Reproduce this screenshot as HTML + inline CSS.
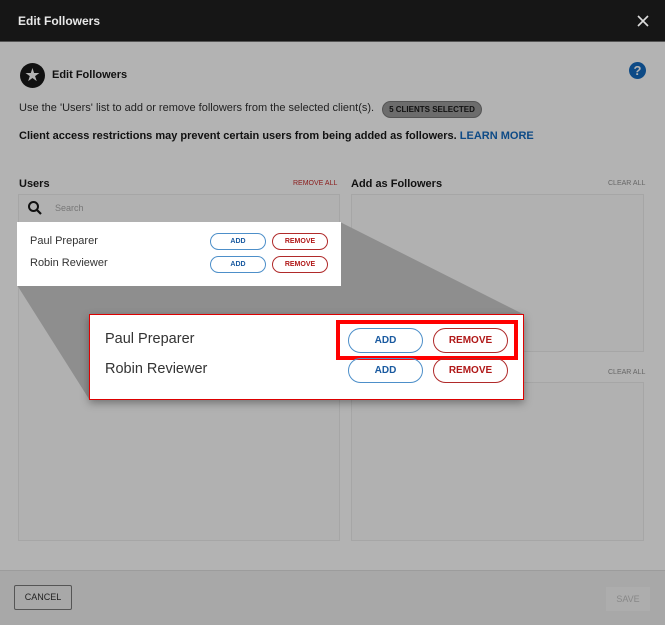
<!DOCTYPE html>
<html><head><style>
*{box-sizing:border-box;margin:0;padding:0}
body{width:665px;height:625px;background:#b3b3b3;font-family:"Liberation Sans",sans-serif;position:relative;overflow:hidden;color:#111}
.a{position:absolute}
.hdr{left:0;top:0;width:665px;height:42px;background:#161616;color:#e8e8e8;font-weight:bold;font-size:12px;padding:14px 0 0 18px;border-bottom:1px solid #555}
.panel{border:1px solid #a6a6a6;background:#b1b1b1}
.btn{position:absolute;border:1px solid;border-radius:12px;text-align:center;font-weight:bold}
.s{font-size:7px;height:17px;line-height:15px}
.b{font-size:10px;height:25px;line-height:23px;border-radius:13px}
.blue{border-color:#4d8fc9;color:#1a5aa0}
.red{border-color:#b02a2a;color:#b01818}
</style></head><body>
<div class="a hdr">Edit Followers</div>
<svg class="a" style="left:637px;top:15px" width="12" height="12" viewBox="0 0 12 12"><path d="M1 1L11 11M11 1L1 11" stroke="#ddd" stroke-width="1.6"/></svg>
<div class="a" style="left:20px;top:63px;width:25px;height:25px;border-radius:50%;background:#111;color:#b3b3b3;font-size:18px;line-height:25px;text-align:center">★</div>
<div class="a" style="left:52px;top:69px;font-size:11px;font-weight:bold">Edit Followers</div>
<div class="a" style="left:629px;top:62px;width:17px;height:17px;border-radius:50%;background:#0d4a86;color:#b3b3b3;font-size:13px;font-weight:bold;text-align:center;line-height:17px">?</div>
<div class="a" style="left:19px;top:102px;font-size:11px;color:#222">Use the 'Users' list to add or remove followers from the selected client(s).</div>
<div class="a" style="left:382px;top:101px;width:100px;height:17px;border-radius:9px;background:#6c6c6c;border:1px solid #555;font-size:8px;font-weight:bold;line-height:15px;text-align:center;color:#111">5 CLIENTS SELECTED</div>
<div class="a" style="left:19px;top:130px;font-size:11px;font-weight:bold">Client access restrictions may prevent certain users from being added as followers. <span style="color:#0d4a86">LEARN MORE</span></div>
<div class="a" style="left:19px;top:178px;font-size:11px;font-weight:bold">Users</div>
<div class="a" style="left:293px;top:180px;font-size:7px;color:#8a1a1a">REMOVE ALL</div>
<div class="a" style="left:351px;top:178px;font-size:11px;font-weight:bold">Add as Followers</div>
<div class="a" style="left:608px;top:180px;font-size:7px;color:#666">CLEAR ALL</div>
<div class="a" style="left:608px;top:369px;font-size:7px;color:#666">CLEAR ALL</div>
<div class="a panel" style="left:18px;top:194px;width:322px;height:347px"></div>
<div class="a panel" style="left:351px;top:194px;width:293px;height:158px"></div>
<div class="a panel" style="left:351px;top:382px;width:293px;height:159px"></div>
<svg class="a" style="left:27px;top:200px" width="16" height="16" viewBox="0 0 16 16"><circle cx="6.5" cy="6.5" r="4.5" fill="none" stroke="#111" stroke-width="2"/><path d="M10 10l4 4" stroke="#111" stroke-width="2.2"/></svg>
<div class="a" style="left:55px;top:203px;font-size:9px;color:#777">Search</div>
<svg class="a" style="left:0;top:0" width="665" height="625"><polygon points="17,285 340,222 523,314 523,399 89,399" fill="#8e8e8e"/></svg>
<div class="a" style="left:17px;top:222px;width:324px;height:64px;background:#fff"></div>
<div class="a" style="left:30px;top:235px;font-size:11px;color:#333">Paul Preparer</div>
<div class="a" style="left:30px;top:257px;font-size:11px;color:#333">Robin Reviewer</div>
<div class="btn s blue" style="left:210px;top:233px;width:56px">ADD</div>
<div class="btn s red" style="left:272px;top:233px;width:56px">REMOVE</div>
<div class="btn s blue" style="left:210px;top:256px;width:56px">ADD</div>
<div class="btn s red" style="left:272px;top:256px;width:56px">REMOVE</div>
<div class="a" style="left:89px;top:314px;width:435px;height:86px;background:#fff;border:1px solid #d00;box-shadow:0 3px 8px rgba(0,0,0,.35)"></div>
<div class="a" style="left:105px;top:331px;font-size:14.5px;color:#333">Paul Preparer</div>
<div class="a" style="left:105px;top:361px;font-size:14.5px;color:#333">Robin Reviewer</div>
<div class="a" style="left:336px;top:320px;width:182px;height:40px;border:4px solid #f00"></div>
<div class="btn b blue" style="left:348px;top:328px;width:75px">ADD</div>
<div class="btn b red" style="left:433px;top:328px;width:75px">REMOVE</div>
<div class="btn b blue" style="left:348px;top:358px;width:75px">ADD</div>
<div class="btn b red" style="left:433px;top:358px;width:75px">REMOVE</div>
<div class="a" style="left:0;top:570px;width:665px;height:55px;background:#a8a8a8;border-top:1px solid #9c9c9c"></div>
<div class="a" style="left:14px;top:585px;width:58px;height:25px;border:1px solid #555;border-radius:2px;font-size:9px;line-height:23px;text-align:center;color:#222">CANCEL</div>
<div class="a" style="left:606px;top:587px;width:44px;height:24px;background:#adadad;font-size:9px;line-height:24px;text-align:center;color:#888">SAVE</div>
</body></html>
